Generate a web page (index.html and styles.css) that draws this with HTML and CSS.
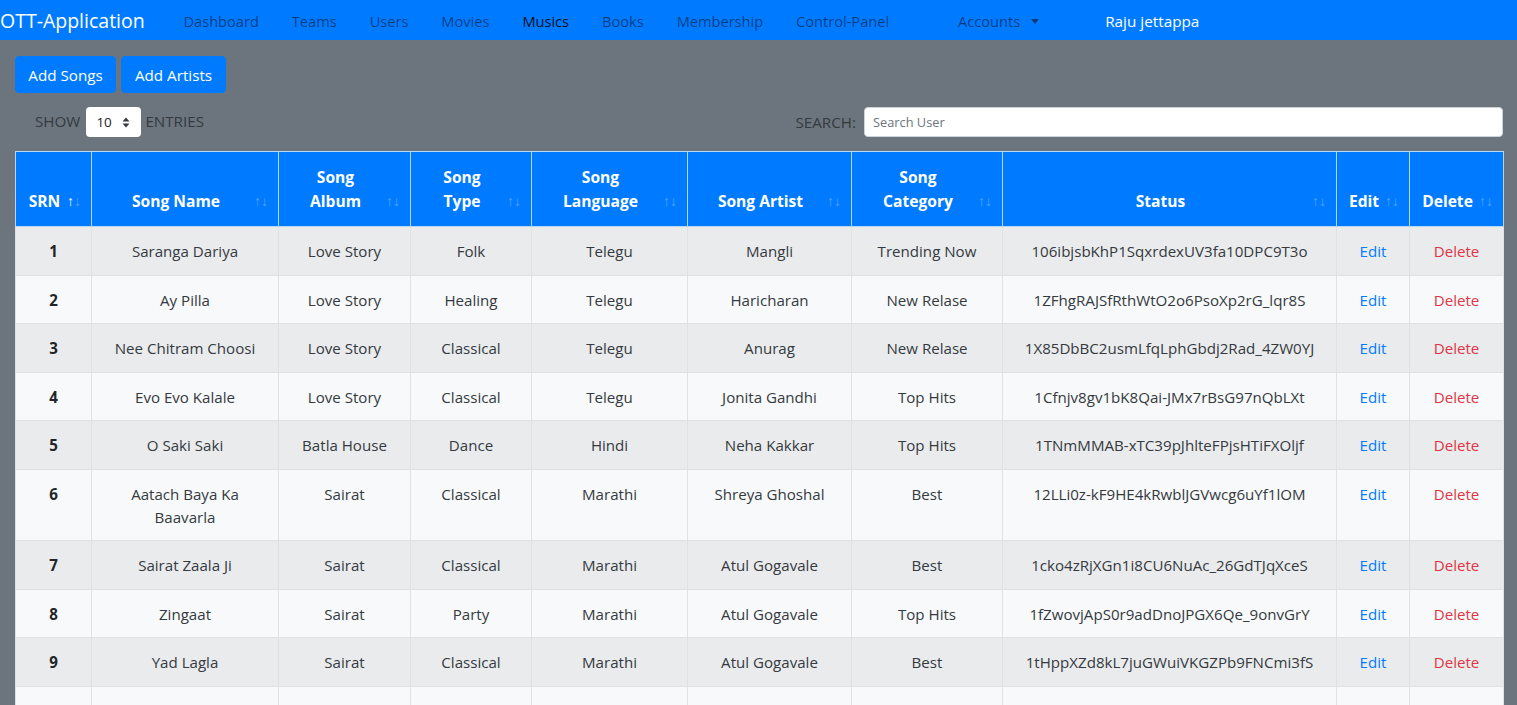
FILE: index.html
```html
<!DOCTYPE html>
<html lang="en">
<head>
<meta charset="utf-8">
<title>OTT-Application - Musics</title>
<link rel="stylesheet" href="styles.css">
</head>
<body>
<nav class="navbar">
  <a class="brand" href="#">OTT-Application</a>
  <ul class="nav-links">
    <li><a class="nav-link" href="#">Dashboard</a></li>
    <li><a class="nav-link" href="#">Teams</a></li>
    <li><a class="nav-link" href="#">Users</a></li>
    <li><a class="nav-link" href="#">Movies</a></li>
    <li><a class="nav-link active" href="#">Musics</a></li>
    <li><a class="nav-link" href="#">Books</a></li>
    <li><a class="nav-link" href="#">Membership</a></li>
    <li><a class="nav-link" href="#">Control-Panel</a></li>
    <li class="accounts"><a class="nav-link" href="#">Accounts<span class="caret"></span></a></li>
    <li class="user"><a class="nav-link user-link" href="#">Raju jettappa</a></li>
  </ul>
</nav>

<main class="content">
  <div class="actions">
    <button class="btn">Add Songs</button>
    <button class="btn">Add Artists</button>
  </div>

  <div class="controls">
    <label class="length">
      <span>SHOW</span>
      <span class="select">10
        <svg class="updown" width="8" height="11" viewBox="0 0 8 11"><path d="M4 0.5 L7.5 4.5 H0.5 Z M4 10.5 L7.5 6.5 H0.5 Z" fill="#343a40"/></svg>
      </span>
      <span>ENTRIES</span>
    </label>
    <label class="search">
      <span>SEARCH:</span>
      <input class="search-input" type="text" placeholder="Search User">
    </label>
  </div>

  <table class="songs">
    <colgroup>
      <col class="c-srn"><col class="c-name"><col class="c-album"><col class="c-type"><col class="c-lang"><col class="c-artist"><col class="c-cat"><col class="c-status"><col class="c-edit"><col class="c-del">
    </colgroup>
    <thead>
      <tr>
        <th class="sort asc">SRN</th>
        <th class="sort">Song Name</th>
        <th class="sort">Song<br>Album</th>
        <th class="sort">Song<br>Type</th>
        <th class="sort">Song<br>Language</th>
        <th class="sort">Song Artist</th>
        <th class="sort">Song<br>Category</th>
        <th class="sort">Status</th>
        <th class="sort">Edit</th>
        <th class="sort">Delete</th>
      </tr>
    </thead>
    <tbody>
      <tr><td class="num">1</td><td>Saranga Dariya</td><td>Love Story</td><td>Folk</td><td>Telegu</td><td>Mangli</td><td>Trending Now</td><td>106ibjsbKhP1SqxrdexUV3fa10DPC9T3o</td><td><a class="edit" href="#">Edit</a></td><td><a class="del" href="#">Delete</a></td></tr>
      <tr><td class="num">2</td><td>Ay Pilla</td><td>Love Story</td><td>Healing</td><td>Telegu</td><td>Haricharan</td><td>New Relase</td><td>1ZFhgRAJSfRthWtO2o6PsoXp2rG_lqr8S</td><td><a class="edit" href="#">Edit</a></td><td><a class="del" href="#">Delete</a></td></tr>
      <tr><td class="num">3</td><td>Nee Chitram Choosi</td><td>Love Story</td><td>Classical</td><td>Telegu</td><td>Anurag</td><td>New Relase</td><td>1X85DbBC2usmLfqLphGbdj2Rad_4ZW0YJ</td><td><a class="edit" href="#">Edit</a></td><td><a class="del" href="#">Delete</a></td></tr>
      <tr><td class="num">4</td><td>Evo Evo Kalale</td><td>Love Story</td><td>Classical</td><td>Telegu</td><td>Jonita Gandhi</td><td>Top Hits</td><td>1Cfnjv8gv1bK8Qai-JMx7rBsG97nQbLXt</td><td><a class="edit" href="#">Edit</a></td><td><a class="del" href="#">Delete</a></td></tr>
      <tr><td class="num">5</td><td>O Saki Saki</td><td>Batla House</td><td>Dance</td><td>Hindi</td><td>Neha Kakkar</td><td>Top Hits</td><td>1TNmMMAB-xTC39pJhlteFPjsHTiFXOljf</td><td><a class="edit" href="#">Edit</a></td><td><a class="del" href="#">Delete</a></td></tr>
      <tr><td class="num">6</td><td>Aatach Baya Ka<br>Baavarla</td><td>Sairat</td><td>Classical</td><td>Marathi</td><td>Shreya Ghoshal</td><td>Best</td><td>12LLi0z-kF9HE4kRwblJGVwcg6uYf1lOM</td><td><a class="edit" href="#">Edit</a></td><td><a class="del" href="#">Delete</a></td></tr>
      <tr><td class="num">7</td><td>Sairat Zaala Ji</td><td>Sairat</td><td>Classical</td><td>Marathi</td><td>Atul Gogavale</td><td>Best</td><td>1cko4zRjXGn1i8CU6NuAc_26GdTJqXceS</td><td><a class="edit" href="#">Edit</a></td><td><a class="del" href="#">Delete</a></td></tr>
      <tr><td class="num">8</td><td>Zingaat</td><td>Sairat</td><td>Party</td><td>Marathi</td><td>Atul Gogavale</td><td>Top Hits</td><td>1fZwovjApS0r9adDnoJPGX6Qe_9onvGrY</td><td><a class="edit" href="#">Edit</a></td><td><a class="del" href="#">Delete</a></td></tr>
      <tr><td class="num">9</td><td>Yad Lagla</td><td>Sairat</td><td>Classical</td><td>Marathi</td><td>Atul Gogavale</td><td>Best</td><td>1tHppXZd8kL7juGWuiVKGZPb9FNCmi3fS</td><td><a class="edit" href="#">Edit</a></td><td><a class="del" href="#">Delete</a></td></tr>
      <tr><td class="num">10</td><td>Kholi Kholi</td><td>Sairat</td><td>Party</td><td>Marathi</td><td>Ajay-Atul</td><td>Best</td><td>1aQmZp3Lk9RtYw2XcVb7NnHs4Df6GjUeT</td><td><a class="edit" href="#">Edit</a></td><td><a class="del" href="#">Delete</a></td></tr>
    </tbody>
  </table>
</main>
</body>
</html>
```

FILE: styles.css
```css
* { box-sizing: border-box; }

html, body {
  margin: 0;
  padding: 0;
}

body {
  background: #6c757d;
  font-family: "Open Sans", "Noto Sans", "Liberation Sans", sans-serif;
  font-size: 15.1px;
  line-height: 23px;
  color: #212529;
}

a { text-decoration: none; }

/* ---------- navbar ---------- */
.navbar {
  display: flex;
  align-items: center;
  height: 40px;
  background: #007bff;
}

.brand {
  flex: 0 0 167px;
  color: #fff;
  font-size: 19.5px;
  line-height: 40px;
  padding-top: 1px;
}

.nav-links {
  display: flex;
  align-items: center;
  list-style: none;
  margin: 0;
  padding: 0;
}

.nav-link {
  display: block;
  padding: 1px 16.5px 0;
  color: rgba(0, 0, 0, 0.5);
  font-size: 14.6px;
  line-height: 40px;
}

.nav-link.active { color: rgba(0, 0, 0, 0.9); }

.accounts { margin-left: 36px; }

.caret {
  display: inline-block;
  width: 0;
  height: 0;
  margin-left: 11px;
  vertical-align: 3px;
  border-top: 5px solid rgba(0, 0, 0, 0.5);
  border-left: 4.5px solid transparent;
  border-right: 4.5px solid transparent;
}

.user { margin-left: 33px; }
.nav-link.user-link {
  color: #fff;
  font-size: 15.3px;
}

/* ---------- content ---------- */
.content {
  padding: 16px 14px 0 15px;
}

.actions {
  display: flex;
  gap: 5px;
}

.btn {
  font-family: inherit;
  font-size: 15.2px;
  line-height: 24px;
  height: 37px;
  padding: 6px 0;
  color: #fff;
  background: #007bff;
  border: 1px solid #007bff;
  border-radius: 4px;
}

.btn:first-child { width: 101px; }
.btn:last-child { width: 105px; }

.controls {
  display: flex;
  justify-content: space-between;
  align-items: center;
  margin-top: 14px;
  height: 30px;
}

.length {
  display: flex;
  align-items: center;
  gap: 6px;
  padding-left: 20px;
  color: #343a40;
  font-size: 15.2px;
  margin-top: -2px;
}

.select {
  display: flex;
  align-items: center;
  justify-content: space-between;
  width: 55px;
  height: 30px;
  margin-top: 2px;
  margin-right: -2px;
  padding: 0 11px 0 10px;
  background: #fff;
  border-radius: 4px;
  color: #212529;
  font-size: 13.5px;
}

.updown { display: block; }

.search {
  display: flex;
  align-items: center;
  gap: 8px;
  color: #343a40;
  font-size: 15.2px;
}

.search-input {
  width: 639px;
  height: 30px;
  padding: 0 8px;
  font-family: inherit;
  font-size: 12.8px;
  color: #495057;
  background: #fff;
  border: 1px solid #ced4da;
  border-radius: 4px;
}

.search-input::placeholder { color: #6c757d; }

/* ---------- table ---------- */
.songs {
  width: 1488px;
  margin-top: 14px;
  border-collapse: collapse;
  table-layout: fixed;
  border: 1px solid #dee2e6;
}

.c-srn { width: 76px; }
.c-name { width: 187px; }
.c-album { width: 132px; }
.c-type { width: 121px; }
.c-lang { width: 156px; }
.c-artist { width: 164px; }
.c-cat { width: 151px; }
.c-status { width: 334px; }
.c-edit { width: 73px; }
.c-del { width: 94px; }

.songs th,
.songs td {
  border: 1px solid #dee2e6;
  text-align: center;
}

.songs th {
  position: relative;
  padding: 14px 30px 13px 12px;
  background: #007bff;
  color: #fff;
  font-weight: 700;
  font-size: 15.6px;
  line-height: 23.5px;
  vertical-align: bottom;
  border-color: #b8d7f7;
}

.songs th.sort::before,
.songs th.sort::after {
  position: absolute;
  bottom: 17px;
  font-size: 14px;
  font-weight: 700;
  line-height: 16px;
  opacity: 0.3;
}

.songs th.sort::before {
  content: "\2191";
  right: 17px;
}

.songs th.sort::after {
  content: "\2193";
  right: 10px;
}

.songs th.asc::before { opacity: 1; }

.songs td {
  padding: 13px 12px 11.5px;
  vertical-align: top;
  color: #343a40;
}

.songs tbody tr:nth-child(odd) td { background: #eaebed; }
.songs tbody tr:nth-child(even) td { background: #f8f9fa; }

.songs td.num {
  font-weight: 700;
  color: #212529;
}

.edit { color: #007bff; }
.del { color: #dc3545; }
```
